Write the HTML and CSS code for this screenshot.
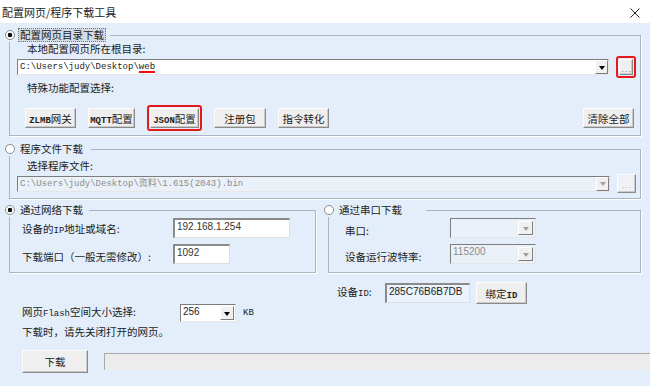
FILE: index.html
```html
<!DOCTYPE html>
<html lang="zh-CN">
<head>
    <meta charset="UTF-8">
    <meta name="viewport" content="width=device-width, initial-scale=1.0">
    <title>配置网页/程序下载工具</title>
    <link rel="stylesheet" href="styles.css">
</head>
<body>
    <div class="window">
        <div class="titlebar">
            <span class="title">配置网页/程序下载工具</span>
            <svg class="close" width="10" height="10" viewBox="0 0 10 10">
                <path d="M0.5 0.5L9.5 9.5M9.5 0.5L0.5 9.5" stroke="#222" stroke-width="1" fill="none"/>
            </svg>
        </div>

        <div class="client">
            <!-- web page folder -->
            <fieldset class="group">
                <legend class="legend legend-web"><span class="radio checked"></span><span class="legend-text focus">配置网页目录下载</span></legend>
                <div class="label indent">本地配置网页所在根目录:</div>
                <div class="path-row">
                    <div class="combo path">
                        <span class="combo-text mono">C:\Users\judy\Desktop\<span class="mark">web</span></span>
                        <span class="combo-arrow"></span>
                    </div>
                    <span class="red-box"><button class="btn dots"><span class="dots-text">...</span></button></span>
                </div>
                <div class="label indent label-gap">特殊功能配置选择:</div>
                <div class="btn-row">
                    <button class="btn btn-zlmb"><span class="en">ZLMB</span>网关</button>
                    <button class="btn btn-mqtt"><span class="en">MQTT</span>配置</button>
                    <span class="red-box"><button class="btn btn-json"><span class="en">JSON</span>配置</button></span>
                    <button class="btn btn-reg">注册包</button>
                    <button class="btn btn-cmd">指令转化</button>
                    <button class="btn btn-clear">清除全部</button>
                </div>
            </fieldset>

            <!-- program file -->
            <fieldset class="group group-file">
                <legend class="legend legend-file"><span class="radio"></span><span class="legend-text">程序文件下载</span></legend>
                <div class="label indent label-gap">选择程序文件:</div>
                <div class="path-row file-row">
                    <div class="combo path disabled">
                        <span class="combo-text mono">C:\Users\judy\Desktop\资料\1.615(2043).bin</span>
                        <span class="combo-arrow"></span>
                    </div>
                    <button class="btn dots disabled-btn"><span class="dots-text">...</span></button>
                </div>
            </fieldset>

            <div class="mode-row">
                <fieldset class="group group-net">
                    <legend class="legend legend-net"><span class="radio checked"></span><span class="legend-text">通过网络下载</span></legend>
                    <div class="field-row first">
                        <span class="label net-label">设备的<span class="en">IP</span>地址或域名:</span>
                        <div class="edit ip-edit">192.168.1.254</div>
                    </div>
                    <div class="field-row">
                        <span class="label net-label">下载端口（一般无需修改）:</span>
                        <div class="edit port-edit">1092</div>
                    </div>
                </fieldset>

                <fieldset class="group group-serial">
                    <legend class="legend legend-serial"><span class="radio"></span><span class="legend-text">通过串口下载</span></legend>
                    <div class="field-row first">
                        <span class="label serial-label">串口:</span>
                        <div class="combo small disabled">
                            <span class="combo-text"></span>
                            <span class="combo-arrow"></span>
                        </div>
                    </div>
                    <div class="field-row">
                        <span class="label serial-label">设备运行波特率:</span>
                        <div class="combo small disabled">
                            <span class="combo-text sans">115200</span>
                            <span class="combo-arrow"></span>
                        </div>
                    </div>
                </fieldset>
            </div>

            <div class="lower">
                <div class="lower-left">
                    <div class="flash-row">
                        <span class="label flash-label">网页<span class="en">Flash</span>空间大小选择:</span>
                        <div class="combo flash">
                            <span class="combo-text sans">256</span>
                            <span class="combo-arrow"></span>
                        </div>
                        <span class="en kb">KB</span>
                    </div>
                    <div class="label tip">下载时，请先关闭打开的网页。</div>
                </div>
                <div class="id-row">
                    <span class="label">设备<span class="en">ID</span>:</span>
                    <div class="edit id-edit mono">285C76B6B7DB</div>
                    <button class="btn btn-bind">绑定<span class="en">ID</span></button>
                </div>
            </div>

            <div class="download-row">
                <button class="btn btn-download">下载</button>
                <div class="progress"></div>
            </div>
        </div>
    </div>
</body>
</html>
```

FILE: styles.css
```css
body {
    margin: 0;
    font-family: "Noto Sans CJK SC", sans-serif;
    font-size: 10.5px;
    line-height: 14px;
    color: #1c1c1c;
}
.window {
    width: 650px;
    height: 386px;
    overflow: hidden;
    background: #e3eefa;
}
.titlebar {
    height: 23px;
    background: #fff;
    display: flex;
    align-items: center;
    justify-content: space-between;
    padding: 0 10px 0 2px;
}
.title {
    font-size: 11px;
}
.close {
    margin-top: 2px;
}
.client {
    padding: 5px 9px 0 9px;
}
.mono {
    font-family: "Liberation Mono", "Noto Sans CJK SC", monospace;
    font-size: 9px;
}
.sans {
    font-family: "Liberation Sans", sans-serif;
    font-size: 10px;
}
.en {
    font-family: "Liberation Mono", monospace;
    font-size: 9px;
}
.btn .en {
    font-weight: bold;
}

/* group boxes */
.group {
    margin: 0;
    padding: 0 4px 4px 7px;
    border: 1px solid #a9b5c1;
    box-shadow: 1px 1px 0 #fff;
    min-width: 0;
}
.group-file {
    margin-top: 6px;
    padding-bottom: 5px;
}
.legend {
    margin-left: -12px;
    padding: 0 4px 0 0;
    display: flex;
    align-items: center;
    gap: 3px;
    height: 14px;
}
.legend-web {
    padding-right: 4px;
}
.legend-file {
    padding-right: 6px;
}
.legend-net {
    margin-left: -17px;
}
.legend-serial {
    margin-left: -21px;
    padding-right: 22px;
}
.legend-text {
    padding: 0 1px;
    border: 1px solid transparent;
    line-height: 12px;
}
.legend-text.focus {
    background: #d3dbe4;
    border: 1px dotted #6f7883;
}
.radio {
    width: 10px;
    height: 10px;
    box-sizing: border-box;
    border-radius: 50%;
    border: 1px solid #8b8b8b;
    background: #fff;
}
.radio.checked {
    background: radial-gradient(circle, #111 0 2px, #fff 2.6px);
}
.label {
    white-space: nowrap;
}
.indent {
    margin-left: 10px;
}
.label-gap {
    margin-top: 3px;
}

/* combo boxes and edits */
.path-row {
    display: flex;
    align-items: center;
    gap: 7px;
}
.file-row {
    margin-top: 1px;
}
.combo {
    display: flex;
    height: 16px;
    box-sizing: border-box;
    border: 1px solid;
    border-color: #7d7d7d #e6e6e6 #e6e6e6 #7d7d7d;
    background: #fff;
}
.combo.path {
    width: 594px;
}
.combo.disabled {
    background: #eaf1f8;
    color: #8c8c8c;
}
.combo-text {
    flex: 1;
    padding-left: 2px;
    line-height: 14px;
    white-space: nowrap;
    overflow: hidden;
}
.combo-arrow {
    width: 13px;
    box-sizing: border-box;
    border: 1px solid;
    border-color: #fff #7d7d7d #7d7d7d #fff;
    background: #f0f0f0;
    display: flex;
    align-items: center;
    justify-content: center;
}
.combo-arrow::before {
    content: "";
    border: 3px solid transparent;
    border-top: 4px solid #000;
    border-bottom: 0;
    margin-top: 1px;
}
.combo.disabled .combo-arrow::before {
    border-top-color: #a0a0a0;
}
.mark {
    text-decoration: underline #e11 2px;
    text-underline-offset: 2px;
}
.red-box {
    display: inline-flex;
    border: 2px solid #e51a1a;
    border-radius: 3px;
    padding: 1px;
}
.edit {
    height: 20px;
    box-sizing: border-box;
    border: 1px solid;
    border-top: 2px solid #8a8a8a;
    border-left: 2px solid #8a8a8a;
    border-right-color: #dedede;
    border-bottom-color: #dedede;
    background: #fff;
    font-family: "Liberation Sans", sans-serif;
    font-size: 10px;
    line-height: 12px;
    padding: 1px 2px;
    color: #333;
}

/* buttons */
.btn {
    font-family: inherit;
    font-size: 10.5px;
    color: #1c1c1c;
    height: 20px;
    padding: 0;
    background: #efefef;
    border: 1px solid;
    border-color: #fdfdfd #8a8a8a #8a8a8a #fdfdfd;
    box-shadow: inset -1px -1px 0 #c9c9c9;
    white-space: nowrap;
}
.btn.dots {
    width: 14px;
    height: 16px;
    color: #777;
}
.dots-text {
    font-family: "Liberation Sans", sans-serif;
    font-size: 9px;
    line-height: 9px;
    letter-spacing: 1px;
    margin-left: 1px;
}
.btn.disabled-btn {
    width: 19px;
    height: 19px;
    color: #b0b0b0;
    background: #eef2f6;
}
.btn-row {
    display: flex;
    align-items: center;
    gap: 12px;
    margin: 10px 0 0 8px;
}
.btn-zlmb { width: 51px; }
.btn-mqtt { width: 47px; }
.btn-json { width: 49px; }
.btn-reg { width: 52px; }
.btn-cmd { width: 51px; }
.btn-clear {
    width: 51px;
    margin-left: auto;
    margin-right: 2px;
}

/* network / serial */
.mode-row {
    display: flex;
    gap: 12px;
    margin-top: 4px;
}
.group-net {
    width: 307px;
    box-sizing: border-box;
    padding: 0 4px 8px 12px;
}
.group-serial {
    flex: 1;
    padding: 0 4px 8px 16px;
}
.field-row {
    display: flex;
    align-items: flex-end;
    margin-top: 6px;
}
.field-row.first {
    margin-top: 1px;
}
.net-label {
    width: 151px;
}
.serial-label {
    width: 105px;
}
.ip-edit { width: 117px; }
.port-edit { width: 57px; }
.combo.small {
    width: 86px;
    height: 20px;
}
.combo.small .combo-arrow {
    width: 15px;
    margin: 2px 2px 2px 0;
}

/* lower area */
.lower {
    display: flex;
    padding-left: 13px;
}
.lower-left {
    width: 315px;
    padding-top: 31px;
}
.flash-row {
    display: flex;
    align-items: center;
}
.flash-label {
    width: 158px;
}
.combo.flash {
    width: 56px;
    height: 18px;
}
.combo.flash .combo-arrow {
    width: 14px;
    margin: 1px;
}
.kb {
    margin-left: 7px;
}
.tip {
    margin-top: 3px;
}
.id-row {
    display: flex;
    align-items: center;
    margin-top: 9px;
    height: 22px;
}
.id-row .label {
    width: 48px;
}
.id-edit {
    width: 85px;
    background: #eaf2fb;
    color: #222;
    line-height: 14px;
    padding: 0 2px;
    margin-right: 6px;
}
.btn-bind {
    width: 51px;
    height: 22px;
}
.download-row {
    display: flex;
    align-items: center;
    gap: 16px;
    margin: 11px -9px 0 13px;
}
.btn-download {
    width: 66px;
    height: 23px;
}
.progress {
    flex: 1;
    height: 16px;
    background: #ececec;
    border-top: 1px solid #a8a8a8;
    border-left: 1px solid #a8a8a8;
}
```
